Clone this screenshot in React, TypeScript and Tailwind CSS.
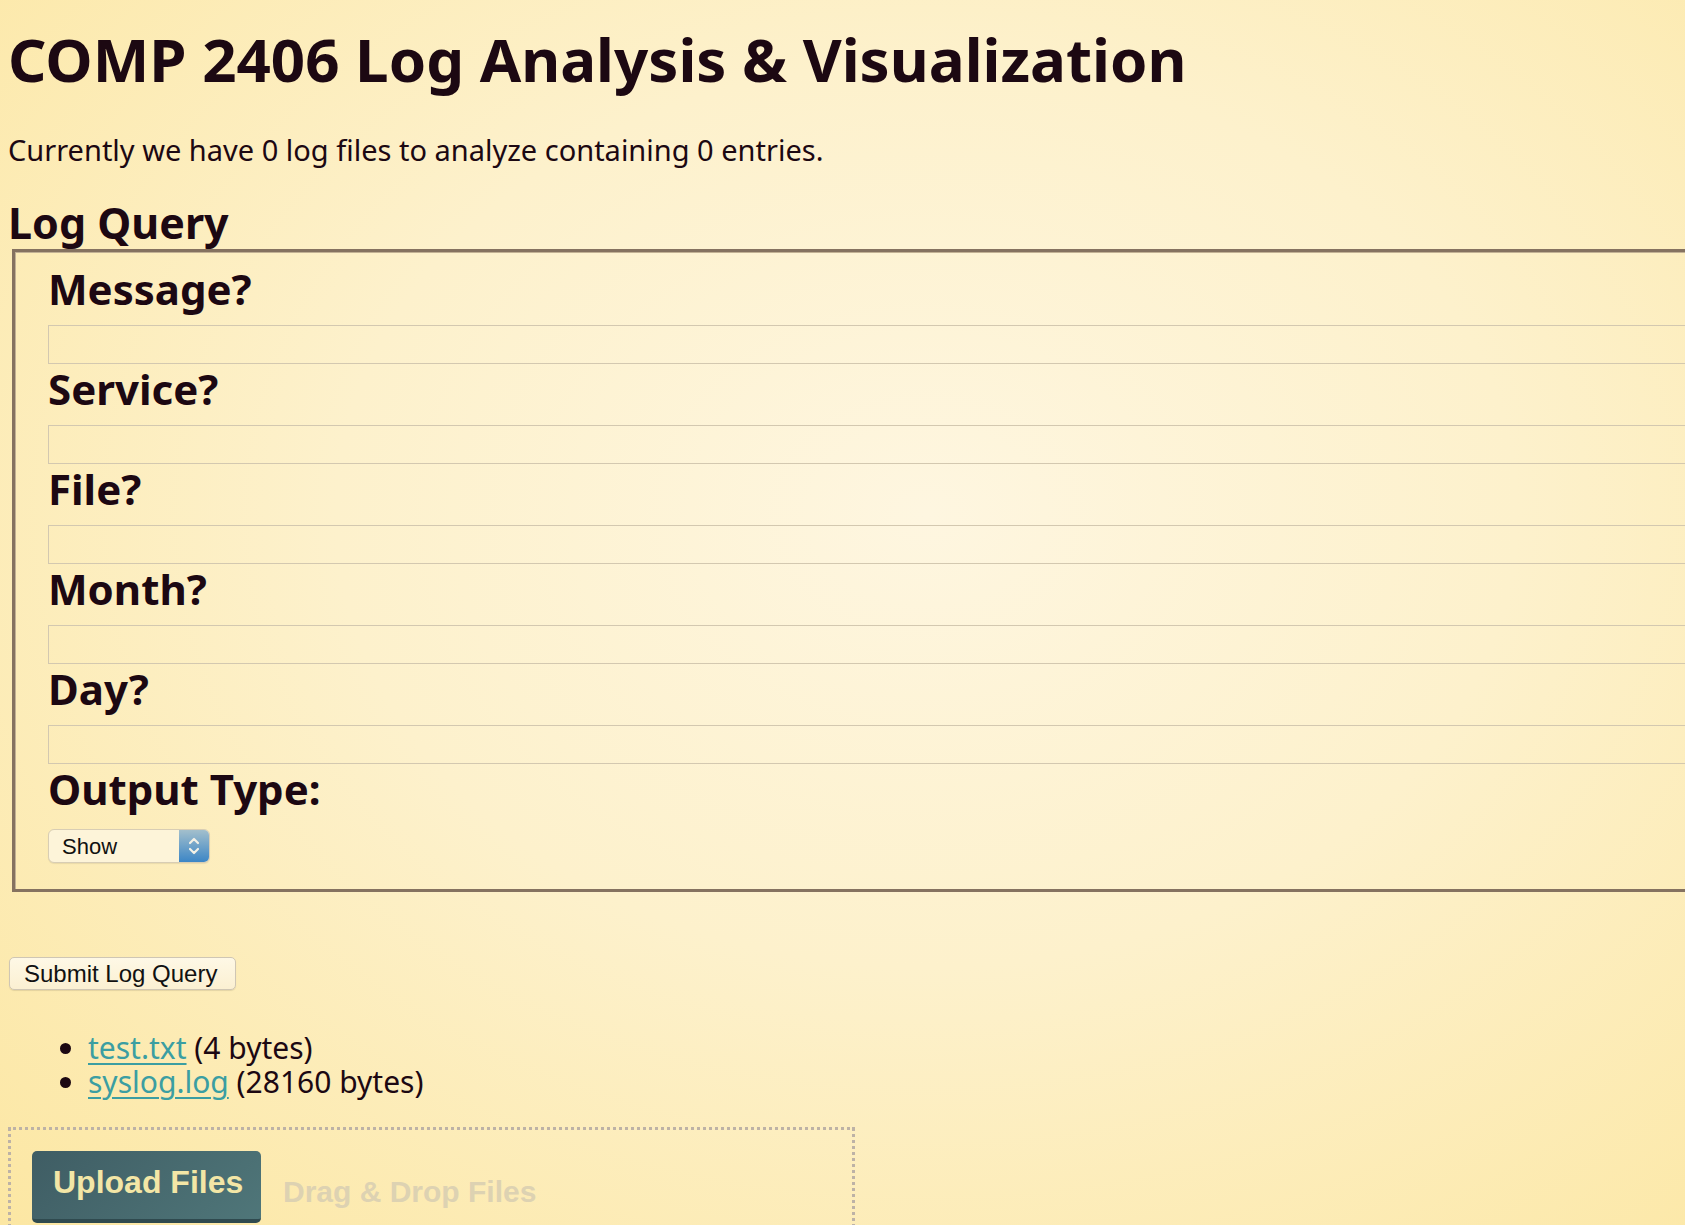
import React from "react";

const fields = ["Message?", "Service?", "File?", "Month?", "Day?"];

export default function App() {
  return (
    <div className="h-[1225px] w-full overflow-hidden bg-[radial-gradient(ellipse_at_55%_42%,#fef6e0_0%,#fdf1cc_45%,#fce7a3_100%)] text-[#1c0812] [font-family:'Noto_Sans',sans-serif]">
      <h1 className="ml-[8px] pt-[23px] text-[60px] font-bold leading-[72px]">
        COMP 2406 Log Analysis &amp; Visualization
      </h1>
      <p className="ml-[8px] mt-[35px] text-[29px] leading-[40px]">
        Currently we have 0 log files to analyze containing 0 entries.
      </p>
      <h2 className="ml-[8px] mt-[30px] text-[43px] font-bold leading-[46px]">Log Query</h2>
      <form>
        <fieldset className="ml-[12px] mt-[3px] w-[1720px] border-[3px] border-[#857260] pl-[33px] pt-[12px] pb-[26px] shadow-[inset_1px_1px_0_#c2b194]">
          {fields.map((f) => (
            <div key={f}>
              <div className="text-[42px] font-bold leading-[50px]">{f}</div>
              <input
                type="text"
                className="mt-[11px] block h-[39px] w-full border border-[#d3c8b0] bg-transparent outline-none"
              />
            </div>
          ))}
          <div className="text-[42px] font-bold leading-[50px]">Output Type:</div>
          <div className="mt-[15px] flex h-[34px] w-[162px] overflow-hidden rounded-[6px] border border-[#d8cdb4] bg-[#fdf4d9] shadow-[0_1px_1px_rgba(0,0,0,0.08)]">
            <div className="flex flex-1 items-center pl-[13px] text-[22px] text-[#111] [font-family:'Liberation_Sans',sans-serif]">
              Show
            </div>
            <div className="flex w-[30px] items-center justify-center bg-[linear-gradient(#a3bfcc,#3c86c6)]">
              <svg width="14" height="22" viewBox="0 0 14 22" fill="none" stroke="#f4f1e6" strokeWidth="2.2" strokeLinecap="round" strokeLinejoin="round">
                <path d="M3 8 L7 4 L11 8" />
                <path d="M3 14 L7 18 L11 14" />
              </svg>
            </div>
          </div>
        </fieldset>
        <button
          type="button"
          className="ml-[9px] mt-[65px] flex h-[33px] w-[227px] items-center rounded-[5px] border border-[#cfc6b4] bg-[linear-gradient(#fef8e6,#fbf0d2)] pl-[14px] text-[24px] text-[#111] shadow-[0_1px_1px_rgba(0,0,0,0.1)] [font-family:'Liberation_Sans',sans-serif]"
        >
          Submit Log Query
        </button>
      </form>
      <ul className="ml-[56px] mt-[41px] list-disc pl-[32px] text-[30px] leading-[34px]">
        <li>
          <a href="#" className="text-[#3b9ea2] underline decoration-[2px] underline-offset-[4px]">test.txt</a> (4 bytes)
        </li>
        <li>
          <a href="#" className="text-[#3b9ea2] underline decoration-[2px] underline-offset-[4px]">syslog.log</a> (28160 bytes)
        </li>
      </ul>
      <div className="ml-[8px] mt-[28px] flex h-[120px] w-[847px] items-start border-[3px] border-dotted border-[#bdb2a6] pl-[21px] pt-[21px] [font-family:'Liberation_Sans',sans-serif]">
        <div className="flex h-[72px] w-[229px] items-start rounded-[5px] border-b-[4px] border-[#2f4a4f] bg-[linear-gradient(135deg,#3f5d64,#4f7679)] pl-[21px] pt-[7px] text-[32px] font-bold text-[#f3e6a6]">
          Upload Files
        </div>
        <div className="ml-[22px] pt-[18px] text-[30px] font-bold text-[#ddd2b2]">Drag &amp; Drop Files</div>
      </div>
    </div>
  );
}
